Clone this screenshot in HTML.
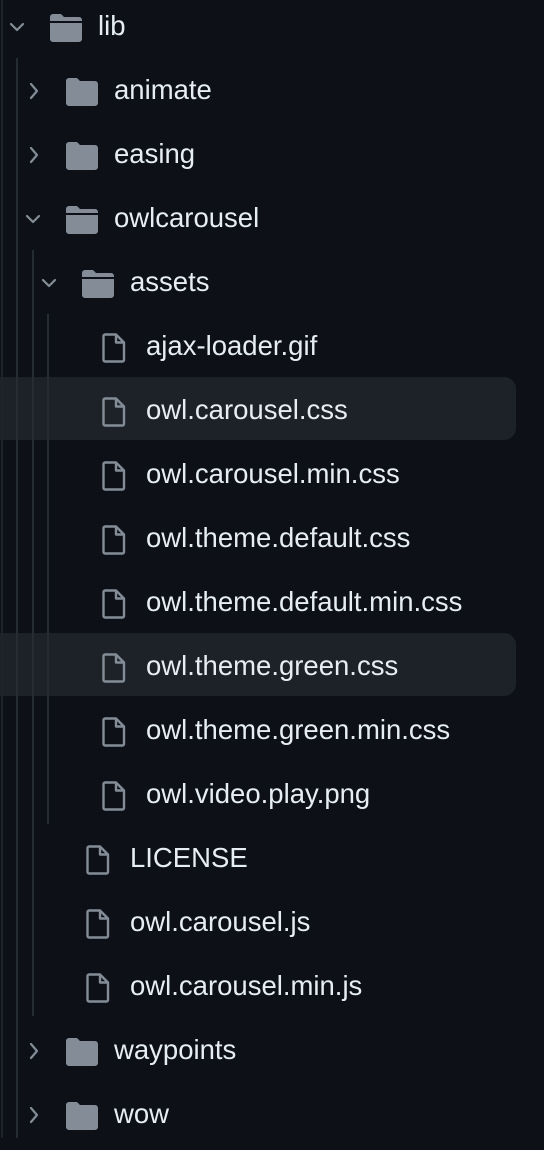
<!DOCTYPE html>
<html><head><meta charset="utf-8"><style>
body{margin:0;width:544px;height:1138px;background:#0d1117;position:relative;overflow:hidden;font-family:"Liberation Sans",sans-serif;}
.row{position:absolute;left:0;height:64px;width:544px;}
.hl{position:absolute;left:0;width:516px;height:63px;background:#1d2229;border-radius:0 12px 12px 0;}
.t{position:absolute;top:12px;font-size:27.5px;color:#e6edf3;line-height:32px;white-space:nowrap;}
svg{position:absolute;}
.g{position:absolute;width:2px;background:#262c34;}
</style></head><body>
<div class="hl" style="top:377px"></div>
<div class="hl" style="top:633px"></div>
<div class="g" style="left:1px;top:0;height:1138px;background:#1f242b"></div>
<div class="g" style="left:16px;top:58px;height:1080px"></div>
<div class="g" style="left:32px;top:250px;height:766px"></div>
<div class="g" style="left:47px;top:314px;height:510px"></div>
<div id="c"></div>
<script>
const rows=[
[0,'o','lib'],[1,'c','animate'],[1,'c','easing'],[1,'o','owlcarousel'],[2,'o','assets'],
[3,'f','ajax-loader.gif'],[3,'f','owl.carousel.css'],[3,'f','owl.carousel.min.css'],[3,'f','owl.theme.default.css'],
[3,'f','owl.theme.default.min.css'],[3,'f','owl.theme.green.css'],[3,'f','owl.theme.green.min.css'],[3,'f','owl.video.play.png'],
[2,'f','LICENSE'],[2,'f','owl.carousel.js'],[2,'f','owl.carousel.min.js'],[1,'c','waypoints'],[1,'c','wow']];
let h='';
rows.forEach((r,i)=>{
 const top=i*64-2, L=r[0]*16, k=r[1];
 h+=`<div class="row" style="top:${top}px">`;
 if(k==='f'){
  h+=`<svg style="left:${L+54}px;top:15px" width="24" height="30" viewBox="0 0 24 30"><path d="M3 1.5h11l8 8v17.5a1.5 1.5 0 0 1-1.5 1.5h-17.5a1.5 1.5 0 0 1-1.5-1.5v-24a1.5 1.5 0 0 1 1.5-1.5z M14 1.5v8h8" fill="none" stroke="#848d97" stroke-width="2.4" stroke-linejoin="round"/></svg>`;
  h+=`<div class="t" style="left:${L+98}px">${r[2]}</div>`;
 } else {
  if(k==='o') h+=`<svg style="left:${L+8}px;top:22px" width="18" height="14" viewBox="0 0 18 14"><path d="M3 4l6 6 6-6" fill="none" stroke="#848d97" stroke-width="2.2" stroke-linecap="round" stroke-linejoin="round"/></svg>`;
  else h+=`<svg style="left:${L+12}px;top:18px" width="14" height="22" viewBox="0 0 14 22"><path d="M3 4l6 7-6 7" fill="none" stroke="#848d97" stroke-width="2.2" stroke-linecap="round" stroke-linejoin="round"/></svg>`;
  if(k==='o') h+=`<svg style="left:${L+50}px;top:16px" width="32" height="28" viewBox="0 0 32 28"><path d="M3 0h8l3 3h15a3 3 0 0 1 3 3v1H0V3a3 3 0 0 1 3-3z M0 9h32v16a3 3 0 0 1-3 3H3a3 3 0 0 1-3-3z" fill="#848d97"/></svg>`;
  else h+=`<svg style="left:${L+50}px;top:16px" width="32" height="28" viewBox="0 0 32 28"><path d="M3 0h8l3 3h15a3 3 0 0 1 3 3v19a3 3 0 0 1-3 3H3a3 3 0 0 1-3-3V3a3 3 0 0 1 3-3z" fill="#848d97"/></svg>`;
  h+=`<div class="t" style="left:${L+98}px">${r[2]}</div>`;
 }
 h+='</div>';
});
document.getElementById('c').innerHTML=h;
</script>
</body></html>
